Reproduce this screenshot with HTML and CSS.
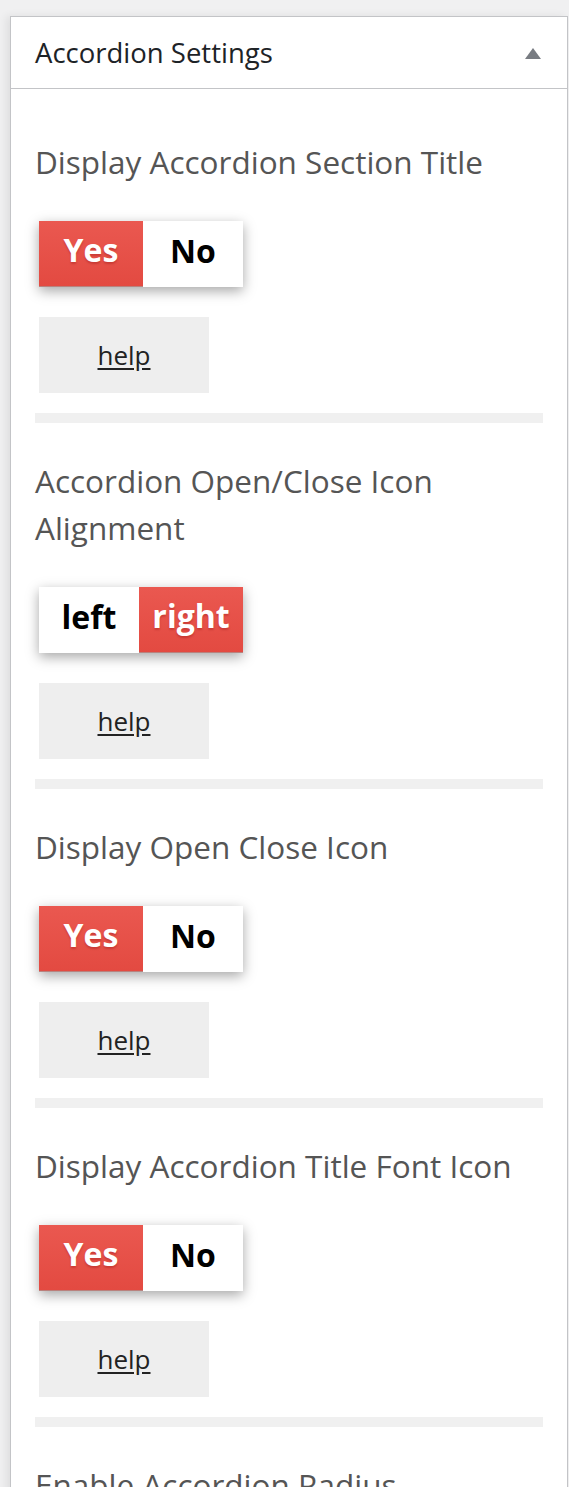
FILE: index.html
```html
<!DOCTYPE html>
<html lang="en">
<head>
<meta charset="utf-8">
<title>Accordion Settings</title>
<link rel="stylesheet" href="styles.css">
</head>
<body>
<div class="postbox">
  <div class="postbox-header">
    <h2 class="postbox-title">Accordion Settings</h2>
    <span class="toggle-arrow" aria-hidden="true"></span>
  </div>
  <div class="inside">
    <div class="field">
      <h3 class="field-title">Display Accordion Section Title</h3>
      <div class="switch"><span class="opt active">Yes</span><span class="opt">No</span></div>
      <div class="help"><a href="#">help</a></div>
    </div>
    <div class="sep"></div>
    <div class="field">
      <h3 class="field-title">Accordion Open/Close Icon Alignment</h3>
      <div class="switch"><span class="opt">left</span><span class="opt active">right</span></div>
      <div class="help"><a href="#">help</a></div>
    </div>
    <div class="sep"></div>
    <div class="field">
      <h3 class="field-title">Display Open Close Icon</h3>
      <div class="switch"><span class="opt active">Yes</span><span class="opt">No</span></div>
      <div class="help"><a href="#">help</a></div>
    </div>
    <div class="sep"></div>
    <div class="field">
      <h3 class="field-title">Display Accordion Title Font Icon</h3>
      <div class="switch"><span class="opt active">Yes</span><span class="opt">No</span></div>
      <div class="help"><a href="#">help</a></div>
    </div>
    <div class="sep"></div>
    <div class="field">
      <h3 class="field-title">Enable Accordion Radius</h3>
    </div>
  </div>
</div>
</body>
</html>
```

FILE: styles.css
```css
html, body {
  margin: 0;
  padding: 0;
  background: #f0f0f1;
}

body {
  font-family: "Open Sans", "Noto Sans", sans-serif;
  height: 1487px;
  overflow: hidden;
}

.postbox {
  margin: 16px 0 0 10px;
  width: 558px;
  box-sizing: border-box;
  background: #fff;
  border: 1px solid #c3c4c7;
  border-bottom: none;
  box-shadow: -4px 0 8px rgba(0, 0, 0, 0.07);
}

.postbox-header {
  display: flex;
  align-items: center;
  justify-content: space-between;
  height: 71px;
  border-bottom: 1px solid #c3c4c7;
  padding: 0 26px 0 24px;
}

.postbox-title {
  margin: 0;
  font-size: 27.5px;
  font-weight: 400;
  color: #1d2327;
}

.toggle-arrow {
  width: 0;
  height: 0;
  border-left: 8px solid transparent;
  border-right: 8px solid transparent;
  border-bottom: 11px solid #787c82;
  margin-top: 2px;
}

.inside {
  padding: 15px 24px 0 24px;
}

.field-title {
  margin: 34px 0 0 0;
  font-size: 31.5px;
  line-height: 47px;
  font-weight: 400;
  color: #555;
}

.switch {
  display: flex;
  width: max-content;
  margin: 36px 0 0 4px;
  height: 66px;
  box-shadow: 0 4px 12px rgba(0, 0, 0, 0.35);
}

.opt {
  display: flex;
  align-items: center;
  justify-content: center;
  width: 100px;
  height: 66px;
  padding-bottom: 8px;
  box-sizing: border-box;
  background: #fff;
  font-size: 32px;
  font-weight: 700;
  color: #000;
}

.opt.active {
  width: 104px;
  background: linear-gradient(#ea5850, #e34a41);
  color: #fff;
  border-bottom: 1px solid #b9827e;
  text-shadow: 0 2px 2px rgba(120, 0, 0, 0.25);
}

.help {
  display: flex;
  align-items: center;
  justify-content: center;
  width: 170px;
  height: 76px;
  margin: 30px 0 0 4px;
  background: #eeeeee;
}

.help a {
  color: #222;
  font-size: 26px;
  text-decoration: underline;
  text-underline-offset: 3px;
}

.sep {
  height: 10px;
  margin-top: 20px;
  background: #f0f0f0;
}
```
